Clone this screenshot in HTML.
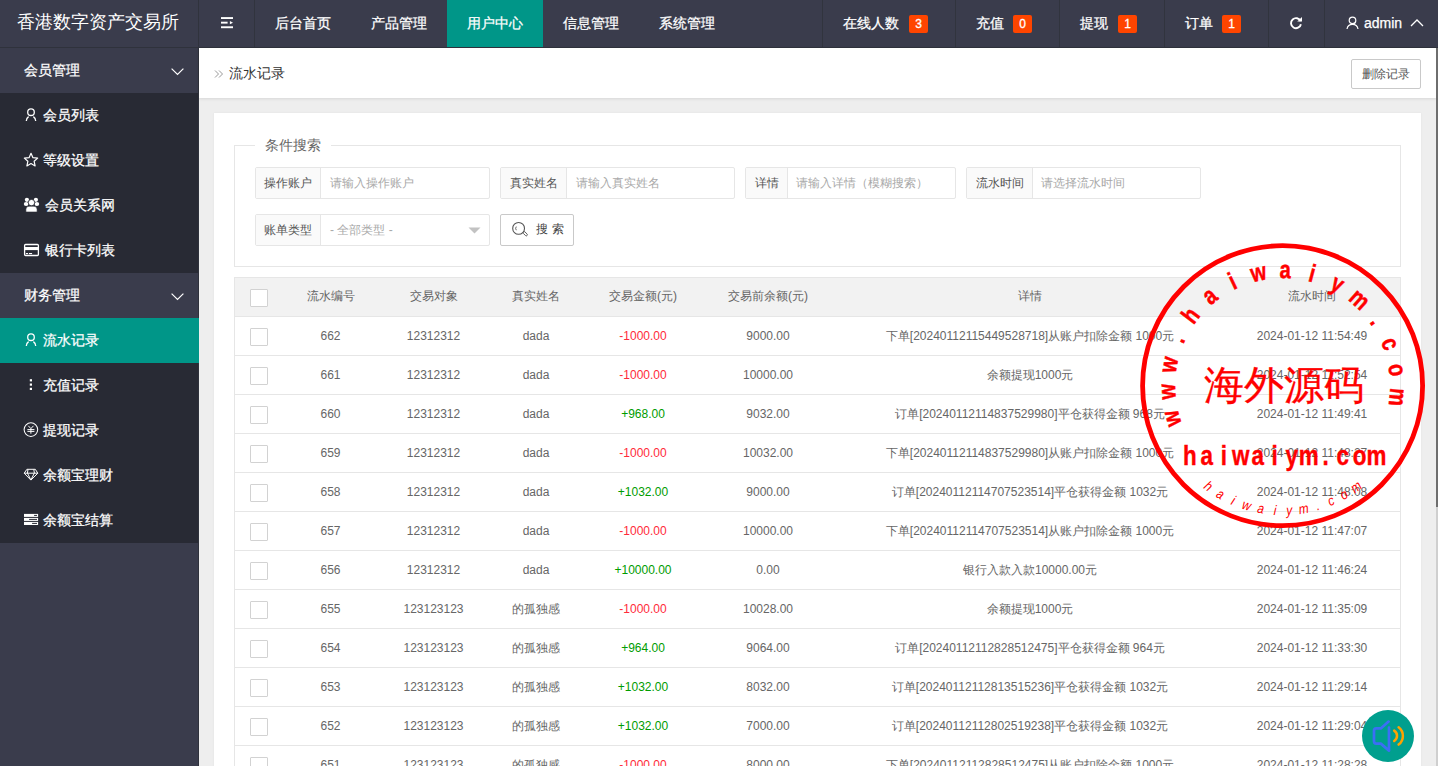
<!DOCTYPE html>
<html><head><meta charset="utf-8">
<style>
*{box-sizing:border-box;margin:0;padding:0}
html,body{width:1438px;height:766px;overflow:hidden}
body{position:relative;background:#eeeeee;font-family:"Liberation Sans",sans-serif;font-size:14px;color:#666;font-weight:500}
.abs{position:absolute}
#hd{position:absolute;left:0;top:0;width:1438px;height:48px;background:#3a3c4c;border-bottom:1px solid #2f323c}
#hd .logo{position:absolute;left:0;top:0;width:199px;height:47px;border-right:1px solid #30333d;color:#fff;font-size:18px;line-height:45px;padding-left:17px;white-space:nowrap}
#hd .sep{position:absolute;top:0;width:1px;height:47px;background:#31343e}
#hd .nv{position:absolute;top:0;height:47px;line-height:46px;color:#fff;font-size:14px;white-space:nowrap;-webkit-text-stroke:0.25px #fff}
#hd .act{background:#009688}
.badge{position:absolute;top:15px;width:19px;height:18px;background:#ff4500;color:#fff;font-size:12px;line-height:18px;text-align:center;border-radius:2px;-webkit-text-stroke:0.3px #fff}
#sd{position:absolute;left:0;top:48px;width:199px;height:718px;background:#3a3c4c;border-right:1px solid #2f323c}
#sd .it{position:absolute;left:0;width:198px;height:45px;line-height:45px;color:#fff;font-size:14px;white-space:nowrap;-webkit-text-stroke:0.25px #fff}
#sd .p{background:#3a3c4c}
#sd .c{background:#282a34}
#sd .on{background:#009688;width:199px}
#sd .it span{position:absolute;left:43px;top:0}
#sd .p span{left:24px}
#sd svg{position:absolute}
</style></head><body>

<div id="hd">
  <div class="logo">香港数字资产交易所</div>
  <svg class="abs" style="left:221px;top:17px" width="13" height="12" viewBox="0 0 13 12"><rect x="0" y="0.1" width="12" height="1.9" fill="#fff"/><rect x="0" y="4.7" width="6.6" height="1.9" fill="#fff"/><path d="M8.9 4.1 L12 5.65 L8.9 7.2Z" fill="#fff"/><rect x="0" y="9.3" width="12" height="1.9" fill="#fff"/></svg>
  <div class="sep" style="left:254px"></div>
  <div class="nv" style="left:275px">后台首页</div>
  <div class="nv" style="left:371px">产品管理</div>
  <div class="nv act" style="left:447px;width:96px;padding-left:20px">用户中心</div>
  <div class="nv" style="left:563px">信息管理</div>
  <div class="nv" style="left:659px">系统管理</div>

  <div class="sep" style="left:822px"></div>
  <div class="nv" style="left:843px">在线人数</div><div class="badge" style="left:909px">3</div>
  <div class="sep" style="left:955px"></div>
  <div class="nv" style="left:976px">充值</div><div class="badge" style="left:1013px">0</div>
  <div class="sep" style="left:1059px"></div>
  <div class="nv" style="left:1080px">提现</div><div class="badge" style="left:1118px">1</div>
  <div class="sep" style="left:1164px"></div>
  <div class="nv" style="left:1185px">订单</div><div class="badge" style="left:1222px">1</div>
  <div class="sep" style="left:1268px"></div>
  <svg class="abs" style="left:1289px;top:16px" width="14" height="14" viewBox="0 0 14 14"><path d="M11.6 5.2 A5 5 0 1 0 11.9 8.2" fill="none" stroke="#fff" stroke-width="1.9"/><path d="M8.2 5.6 L13 5.6 L13 0.9 Z" fill="#fff"/></svg>
  <div class="sep" style="left:1324px"></div>
  <svg class="abs" style="left:1346px;top:16px" width="13" height="14" viewBox="0 0 13 14"><circle cx="6.5" cy="4.4" r="3.3" fill="none" stroke="#fff" stroke-width="1.2"/><path d="M1 13 A5.6 5.6 0 0 1 12 13" fill="none" stroke="#fff" stroke-width="1.2"/></svg>
  <div class="nv" style="left:1364px">admin</div>
  <svg class="abs" style="left:1410px;top:19px" width="14" height="8" viewBox="0 0 14 8"><path d="M1 7 L7 1 L13 7" fill="none" stroke="#fff" stroke-width="1.3"/></svg>
</div>

<div id="sd">
  <div class="it p" style="top:0"><span>会员管理</span></div>
  <svg style="left:171px;top:20px" width="13" height="8" viewBox="0 0 13 8"><path d="M0.6 0.6 L6.5 6.5 L12.4 0.6" fill="none" stroke="#fff" stroke-width="1.2"/></svg>
  <div class="it c" style="top:45px"><span>会员列表</span></div>
  <div class="it c" style="top:90px"><span>等级设置</span></div>
  <div class="it c" style="top:135px"><span style="left:45px">会员关系网</span></div>
  <div class="it c" style="top:180px"><span style="left:45px">银行卡列表</span></div>
  <div class="it p" style="top:225px"><span>财务管理</span></div>
  <svg style="left:171px;top:245px" width="13" height="8" viewBox="0 0 13 8"><path d="M0.6 0.6 L6.5 6.5 L12.4 0.6" fill="none" stroke="#fff" stroke-width="1.2"/></svg>
  <div class="it on" style="top:270px"><span>流水记录</span></div>
  <div class="it c" style="top:315px"><span>充值记录</span></div>
  <div class="it c" style="top:360px"><span>提现记录</span></div>
  <div class="it c" style="top:405px"><span>余额宝理财</span></div>
  <div class="it c" style="top:450px"><span>余额宝结算</span></div>
</div>


<style>
#bc{position:absolute;left:199px;top:48px;width:1237px;height:50px;background:#fff;box-shadow:0 1px 3px rgba(0,0,0,.10)}
#bc .t{position:absolute;left:30px;top:0;line-height:50px;font-size:14px;color:#333}
#bc .btn{position:absolute;left:1152px;top:11px;width:70px;height:30px;border:1px solid #c9c9c9;border-radius:2px;font-size:12px;color:#555;text-align:center;line-height:28px}
#card{position:absolute;left:214px;top:113px;width:1207px;height:700px;background:#fff;box-shadow:0 0 2px rgba(0,0,0,.06)}
#fs{position:absolute;left:234px;top:145px;width:1167px;height:122px;border:1px solid #e6e6e6}
#lg{position:absolute;left:255px;top:135px;width:76px;height:20px;background:#fff;text-align:center;line-height:20px;font-size:14px;color:#666}
.ig{position:absolute;height:32px;border:1px solid #e6e6e6;border-radius:2px;background:#fff}
.ig .lb{position:absolute;left:0;top:0;height:30px;line-height:30px;background:#fafafa;border-right:1px solid #e6e6e6;font-size:12px;color:#555;text-align:center}
.ig .ph{position:absolute;top:0;line-height:30px;font-size:12px;color:#a9a9a9;white-space:nowrap}
#sbtn{position:absolute;left:500px;top:214px;width:74px;height:32px;border:1px solid #c9c9c9;border-radius:2px;background:#fff}
#sbtn span{position:absolute;left:35px;top:0;line-height:30px;font-size:12px;color:#333;letter-spacing:4px}
#tb{position:absolute;left:234px;top:277px;width:1167px;height:489px;border:1px solid #e6e6e6;border-bottom:none}
#th{position:absolute;left:234px;top:277px;width:1167px;height:40px;background:#f2f2f2;border:1px solid #e6e6e6}
.tr{position:absolute;left:234px;width:1167px;height:39px;border-bottom:1px solid #e6e6e6;border-left:1px solid #e6e6e6;border-right:1px solid #e6e6e6}
.tr b,.th b{position:absolute;top:0;font-weight:500;text-align:center;line-height:38px;font-size:12px;color:#666;white-space:nowrap}
.th b{line-height:38px}
.tr b{margin-left:-235px}
.cb{position:absolute;left:15px;top:11px;width:18px;height:18px;border:1px solid #d2d2d2;background:#fff;border-radius:1px}
.neg{color:#ff2b3a !important}
.pos{color:#009c00 !important}
#scr{position:absolute;left:1436px;top:48px;width:2px;height:718px;background:#cfcfcf}
#thumb{position:absolute;left:1436px;top:48px;width:2px;height:459px;background:#6e6e6e}
</style>

<svg class="abs" style="left:0;top:0;pointer-events:none" width="199" height="766" viewBox="0 0 199 766">
 <g fill="none" stroke="#fff" stroke-width="1.3">
  <circle cx="31" cy="112.2" r="3.3"/>
  <path d="M26.3 121 A5.3 5.3 0 0 1 28.6 116.6"/>
  <path d="M33.4 116.6 A5.3 5.3 0 0 1 35.7 121"/>
  <circle cx="31" cy="337.2" r="3.3"/>
  <path d="M26.3 346 A5.3 5.3 0 0 1 28.6 341.6"/>
  <path d="M33.4 341.6 A5.3 5.3 0 0 1 35.7 346"/>
 </g>
 <path fill="none" stroke="#fff" stroke-width="1.2" stroke-linejoin="round" d="M31.00 153.30 L32.94 157.63 L37.66 158.14 L34.14 161.32 L35.11 165.96 L31.00 163.60 L26.89 165.96 L27.86 161.32 L24.34 158.14 L29.06 157.63Z"/>
 <g fill="#fff">
  <circle cx="26.9" cy="199.8" r="2.1"/><circle cx="35.9" cy="199.8" r="2.1"/>
  <ellipse cx="26.1" cy="204" rx="2.3" ry="2"/><ellipse cx="36.9" cy="204" rx="2.3" ry="2"/>
  <circle cx="31.5" cy="202.6" r="3.2" stroke="#282a34" stroke-width="0.8"/>
  <path d="M25.9 212 L25.9 209.5 Q25.9 206.2 29 206.2 L34 206.2 Q37.1 206.2 37.1 209.5 L37.1 212Z" stroke="#282a34" stroke-width="0.6"/>
 </g>
 <rect x="24.6" y="244.5" width="13.8" height="11" rx="1" fill="none" stroke="#fff" stroke-width="1.3"/>
 <rect x="24.6" y="247" width="13.8" height="3.1" fill="#fff"/>
 <rect x="25.9" y="253" width="2.1" height="1.1" fill="#fff"/><rect x="28.9" y="253" width="3.2" height="1.1" fill="#fff"/>
 <g fill="#fff"><rect x="29.8" y="379.2" width="2.2" height="2.2"/><rect x="29.8" y="383.5" width="2.2" height="2.2"/><rect x="29.8" y="387.8" width="2.2" height="2.2"/></g>
 <circle cx="30.9" cy="429.6" r="6.8" fill="none" stroke="#fff" stroke-width="1.05"/>
 <path d="M28.3 425.8 L30.9 428.6 L33.5 425.8 M27.4 429.6 L34.4 429.6 M27.4 431.4 L34.4 431.4 M30.9 428.6 L30.9 433.7" fill="none" stroke="#fff" stroke-width="1"/>
 <path d="M26.9 469.3 L35.3 469.3 L37.8 473.2 L30.9 480.1 L24.2 473.2Z M24.2 473.2 L37.8 473.2 M28 469.5 L27.4 473 L30.9 480 L34.4 473 L33.8 469.5" fill="none" stroke="#fff" stroke-width="1" stroke-linejoin="round"/>
 <g fill="#fff"><rect x="24" y="513.9" width="14.1" height="3"/><rect x="24" y="517.9" width="14.1" height="3"/><rect x="24" y="521.9" width="14.1" height="3.1"/></g>
 <g stroke="#282a34" stroke-width="1" stroke-linecap="round"><path d="M34.5 515.4 L36.6 515.4 M29.5 519.4 L36.6 519.4 M32.5 523.4 L36.6 523.4"/></g>
</svg>
<div id="bc">
  <svg class="abs" style="left:15px;top:21px" width="10" height="10" viewBox="0 0 10 10"><path d="M1 1.5 L4.5 5 L1 8.5 M5 1.5 L8.5 5 L5 8.5" fill="none" stroke="#999" stroke-width="1"/></svg>
  <div class="t">流水记录</div>
  <div class="btn">删除记录</div>
</div>
<div id="card"></div>
<div id="fs"></div>
<div id="lg">条件搜索</div>

<div class="ig" style="left:255px;top:167px;width:235px"><div class="lb" style="width:65px">操作账户</div><div class="ph" style="left:74px">请输入操作账户</div></div>
<div class="ig" style="left:500px;top:167px;width:235px"><div class="lb" style="width:66px">真实姓名</div><div class="ph" style="left:75px">请输入真实姓名</div></div>
<div class="ig" style="left:745px;top:167px;width:211px"><div class="lb" style="width:42px">详情</div><div class="ph" style="left:50px">请输入详情（模糊搜索）</div></div>
<div class="ig" style="left:966px;top:167px;width:235px"><div class="lb" style="width:66px">流水时间</div><div class="ph" style="left:74px">请选择流水时间</div></div>
<div class="ig" style="left:255px;top:214px;width:235px"><div class="lb" style="width:65px">账单类型</div><div class="ph" style="left:74px">- 全部类型 -</div>
  <svg class="abs" style="left:212px;top:12px" width="13" height="7" viewBox="0 0 13 7"><path d="M0.5 0.5 L12.5 0.5 L6.5 6.5Z" fill="#c2c2c2"/></svg></div>
<div id="sbtn"><svg class="abs" style="left:10.3px;top:5.8px" width="18" height="17" viewBox="0 0 18 17"><circle cx="7.6" cy="7.4" r="5.9" fill="none" stroke="#555" stroke-width="1.1"/><rect x="11.6" y="11.6" width="5.2" height="2.2" rx="1.1" transform="rotate(45 14.2 12.7)" fill="none" stroke="#555" stroke-width="0.9"/><path d="M5.3 5.6 A3 3 0 0 0 5.3 9.2" fill="none" stroke="#555" stroke-width="0.9"/></svg><span style="top:-1px;color:#444">搜索</span></div>

<div id="th"><i class="cb" style="top:11px"></i></div>
<div class="th" style="position:absolute;left:0;top:277px;width:1438px;height:40px">
<b style="left:284px;width:93px">流水编号</b><b style="left:377px;width:113px">交易对象</b><b style="left:490px;width:92px">真实姓名</b><b style="left:582px;width:122px">交易金额(元)</b><b style="left:704px;width:128px">交易前余额(元)</b><b style="left:832px;width:396px">详情</b><b style="left:1228px;width:168px">流水时间</b>
</div>
<div class="tr" style="top:317px"><i class="cb"></i><b style="left:284px;width:93px">662</b><b style="left:377px;width:113px">12312312</b><b style="left:490px;width:92px">dada</b><b class="neg" style="left:582px;width:122px">-1000.00</b><b style="left:704px;width:128px">9000.00</b><b style="left:832px;width:396px">下单[20240112115449528718]从账户扣除金额 1000元</b><b style="left:1228px;width:168px">2024-01-12 11:54:49</b></div>
<div class="tr" style="top:356px"><i class="cb"></i><b style="left:284px;width:93px">661</b><b style="left:377px;width:113px">12312312</b><b style="left:490px;width:92px">dada</b><b class="neg" style="left:582px;width:122px">-1000.00</b><b style="left:704px;width:128px">10000.00</b><b style="left:832px;width:396px">余额提现1000元</b><b style="left:1228px;width:168px">2024-01-12 11:52:54</b></div>
<div class="tr" style="top:395px"><i class="cb"></i><b style="left:284px;width:93px">660</b><b style="left:377px;width:113px">12312312</b><b style="left:490px;width:92px">dada</b><b class="pos" style="left:582px;width:122px">+968.00</b><b style="left:704px;width:128px">9032.00</b><b style="left:832px;width:396px">订单[20240112114837529980]平仓获得金额 968元</b><b style="left:1228px;width:168px">2024-01-12 11:49:41</b></div>
<div class="tr" style="top:434px"><i class="cb"></i><b style="left:284px;width:93px">659</b><b style="left:377px;width:113px">12312312</b><b style="left:490px;width:92px">dada</b><b class="neg" style="left:582px;width:122px">-1000.00</b><b style="left:704px;width:128px">10032.00</b><b style="left:832px;width:396px">下单[20240112114837529980]从账户扣除金额 1000元</b><b style="left:1228px;width:168px">2024-01-12 11:48:27</b></div>
<div class="tr" style="top:473px"><i class="cb"></i><b style="left:284px;width:93px">658</b><b style="left:377px;width:113px">12312312</b><b style="left:490px;width:92px">dada</b><b class="pos" style="left:582px;width:122px">+1032.00</b><b style="left:704px;width:128px">9000.00</b><b style="left:832px;width:396px">订单[20240112114707523514]平仓获得金额 1032元</b><b style="left:1228px;width:168px">2024-01-12 11:48:08</b></div>
<div class="tr" style="top:512px"><i class="cb"></i><b style="left:284px;width:93px">657</b><b style="left:377px;width:113px">12312312</b><b style="left:490px;width:92px">dada</b><b class="neg" style="left:582px;width:122px">-1000.00</b><b style="left:704px;width:128px">10000.00</b><b style="left:832px;width:396px">下单[20240112114707523514]从账户扣除金额 1000元</b><b style="left:1228px;width:168px">2024-01-12 11:47:07</b></div>
<div class="tr" style="top:551px"><i class="cb"></i><b style="left:284px;width:93px">656</b><b style="left:377px;width:113px">12312312</b><b style="left:490px;width:92px">dada</b><b class="pos" style="left:582px;width:122px">+10000.00</b><b style="left:704px;width:128px">0.00</b><b style="left:832px;width:396px">银行入款入款10000.00元</b><b style="left:1228px;width:168px">2024-01-12 11:46:24</b></div>
<div class="tr" style="top:590px"><i class="cb"></i><b style="left:284px;width:93px">655</b><b style="left:377px;width:113px">123123123</b><b style="left:490px;width:92px">的孤独感</b><b class="neg" style="left:582px;width:122px">-1000.00</b><b style="left:704px;width:128px">10028.00</b><b style="left:832px;width:396px">余额提现1000元</b><b style="left:1228px;width:168px">2024-01-12 11:35:09</b></div>
<div class="tr" style="top:629px"><i class="cb"></i><b style="left:284px;width:93px">654</b><b style="left:377px;width:113px">123123123</b><b style="left:490px;width:92px">的孤独感</b><b class="pos" style="left:582px;width:122px">+964.00</b><b style="left:704px;width:128px">9064.00</b><b style="left:832px;width:396px">订单[20240112112828512475]平仓获得金额 964元</b><b style="left:1228px;width:168px">2024-01-12 11:33:30</b></div>
<div class="tr" style="top:668px"><i class="cb"></i><b style="left:284px;width:93px">653</b><b style="left:377px;width:113px">123123123</b><b style="left:490px;width:92px">的孤独感</b><b class="pos" style="left:582px;width:122px">+1032.00</b><b style="left:704px;width:128px">8032.00</b><b style="left:832px;width:396px">订单[20240112112813515236]平仓获得金额 1032元</b><b style="left:1228px;width:168px">2024-01-12 11:29:14</b></div>
<div class="tr" style="top:707px"><i class="cb"></i><b style="left:284px;width:93px">652</b><b style="left:377px;width:113px">123123123</b><b style="left:490px;width:92px">的孤独感</b><b class="pos" style="left:582px;width:122px">+1032.00</b><b style="left:704px;width:128px">7000.00</b><b style="left:832px;width:396px">订单[20240112112802519238]平仓获得金额 1032元</b><b style="left:1228px;width:168px">2024-01-12 11:29:04</b></div>
<div class="tr" style="top:746px"><i class="cb"></i><b style="left:284px;width:93px">651</b><b style="left:377px;width:113px">123123123</b><b style="left:490px;width:92px">的孤独感</b><b class="neg" style="left:582px;width:122px">-1000.00</b><b style="left:704px;width:128px">8000.00</b><b style="left:832px;width:396px">下单[20240112112828512475]从账户扣除金额 1000元</b><b style="left:1228px;width:168px">2024-01-12 11:28:28</b></div>
<svg class="abs" style="left:0;top:0;pointer-events:none" width="1438" height="766" viewBox="0 0 1438 766">
<circle cx="1282.6" cy="385.7" r="140" fill="none" stroke="#ff0000" stroke-width="4.8"/>
<text transform="translate(1179.53 416.23) rotate(-106.50) scale(0.8 1)" text-anchor="middle" font-family="Liberation Sans" font-weight="bold" font-size="25" fill="#ff0000" stroke="#ff0000" stroke-width="0.5">w</text>
<text transform="translate(1175.25 391.36) rotate(-93.02) scale(0.8 1)" text-anchor="middle" font-family="Liberation Sans" font-weight="bold" font-size="25" fill="#ff0000" stroke="#ff0000" stroke-width="0.5">w</text>
<text transform="translate(1176.89 366.18) rotate(-79.54) scale(0.8 1)" text-anchor="middle" font-family="Liberation Sans" font-weight="bold" font-size="25" fill="#ff0000" stroke="#ff0000" stroke-width="0.5">w</text>
<text transform="translate(1184.35 342.08) rotate(-66.06) scale(0.8 1)" text-anchor="middle" font-family="Liberation Sans" font-weight="bold" font-size="25" fill="#ff0000" stroke="#ff0000" stroke-width="0.5">.</text>
<text transform="translate(1197.22 320.38) rotate(-52.58) scale(0.8 1)" text-anchor="middle" font-family="Liberation Sans" font-weight="bold" font-size="25" fill="#ff0000" stroke="#ff0000" stroke-width="0.5">h</text>
<text transform="translate(1214.80 302.28) rotate(-39.10) scale(0.8 1)" text-anchor="middle" font-family="Liberation Sans" font-weight="bold" font-size="25" fill="#ff0000" stroke="#ff0000" stroke-width="0.5">a</text>
<text transform="translate(1236.12 288.77) rotate(-25.62) scale(0.8 1)" text-anchor="middle" font-family="Liberation Sans" font-weight="bold" font-size="25" fill="#ff0000" stroke="#ff0000" stroke-width="0.5">i</text>
<text transform="translate(1259.99 280.60) rotate(-12.14) scale(0.8 1)" text-anchor="middle" font-family="Liberation Sans" font-weight="bold" font-size="25" fill="#ff0000" stroke="#ff0000" stroke-width="0.5">w</text>
<text transform="translate(1285.11 278.23) rotate(1.34) scale(0.8 1)" text-anchor="middle" font-family="Liberation Sans" font-weight="bold" font-size="25" fill="#ff0000" stroke="#ff0000" stroke-width="0.5">a</text>
<text transform="translate(1310.10 281.78) rotate(14.82) scale(0.8 1)" text-anchor="middle" font-family="Liberation Sans" font-weight="bold" font-size="25" fill="#ff0000" stroke="#ff0000" stroke-width="0.5">i</text>
<text transform="translate(1333.56 291.05) rotate(28.30) scale(0.8 1)" text-anchor="middle" font-family="Liberation Sans" font-weight="bold" font-size="25" fill="#ff0000" stroke="#ff0000" stroke-width="0.5">y</text>
<text transform="translate(1354.22 305.54) rotate(41.78) scale(0.8 1)" text-anchor="middle" font-family="Liberation Sans" font-weight="bold" font-size="25" fill="#ff0000" stroke="#ff0000" stroke-width="0.5">m</text>
<text transform="translate(1370.94 324.44) rotate(55.26) scale(0.8 1)" text-anchor="middle" font-family="Liberation Sans" font-weight="bold" font-size="25" fill="#ff0000" stroke="#ff0000" stroke-width="0.5">.</text>
<text transform="translate(1382.78 346.72) rotate(68.74) scale(0.8 1)" text-anchor="middle" font-family="Liberation Sans" font-weight="bold" font-size="25" fill="#ff0000" stroke="#ff0000" stroke-width="0.5">c</text>
<text transform="translate(1389.11 371.15) rotate(82.22) scale(0.8 1)" text-anchor="middle" font-family="Liberation Sans" font-weight="bold" font-size="25" fill="#ff0000" stroke="#ff0000" stroke-width="0.5">o</text>
<text transform="translate(1389.57 396.38) rotate(95.70) scale(0.8 1)" text-anchor="middle" font-family="Liberation Sans" font-weight="bold" font-size="25" fill="#ff0000" stroke="#ff0000" stroke-width="0.5">m</text>
<text transform="translate(1205.75 489.93) rotate(36.40) scale(0.85 1)" text-anchor="middle" font-family="Liberation Sans" font-style="italic" font-size="14" fill="#ff0000">h</text>
<text transform="translate(1218.20 498.05) rotate(29.82) scale(0.85 1)" text-anchor="middle" font-family="Liberation Sans" font-style="italic" font-size="14" fill="#ff0000">a</text>
<text transform="translate(1231.50 504.69) rotate(23.24) scale(0.85 1)" text-anchor="middle" font-family="Liberation Sans" font-style="italic" font-size="14" fill="#ff0000">i</text>
<text transform="translate(1245.47 509.76) rotate(16.66) scale(0.85 1)" text-anchor="middle" font-family="Liberation Sans" font-style="italic" font-size="14" fill="#ff0000">w</text>
<text transform="translate(1259.93 513.20) rotate(10.08) scale(0.85 1)" text-anchor="middle" font-family="Liberation Sans" font-style="italic" font-size="14" fill="#ff0000">a</text>
<text transform="translate(1274.69 514.96) rotate(3.50) scale(0.85 1)" text-anchor="middle" font-family="Liberation Sans" font-style="italic" font-size="14" fill="#ff0000">i</text>
<text transform="translate(1289.56 515.01) rotate(-3.08) scale(0.85 1)" text-anchor="middle" font-family="Liberation Sans" font-style="italic" font-size="14" fill="#ff0000">y</text>
<text transform="translate(1304.33 513.36) rotate(-9.66) scale(0.85 1)" text-anchor="middle" font-family="Liberation Sans" font-style="italic" font-size="14" fill="#ff0000">m</text>
<text transform="translate(1318.82 510.03) rotate(-16.24) scale(0.85 1)" text-anchor="middle" font-family="Liberation Sans" font-style="italic" font-size="14" fill="#ff0000">.</text>
<text transform="translate(1332.82 505.06) rotate(-22.82) scale(0.85 1)" text-anchor="middle" font-family="Liberation Sans" font-style="italic" font-size="14" fill="#ff0000">c</text>
<text transform="translate(1346.17 498.52) rotate(-29.40) scale(0.85 1)" text-anchor="middle" font-family="Liberation Sans" font-style="italic" font-size="14" fill="#ff0000">o</text>
<text transform="translate(1358.68 490.49) rotate(-35.98) scale(0.85 1)" text-anchor="middle" font-family="Liberation Sans" font-style="italic" font-size="14" fill="#ff0000">m</text>
<text transform="translate(1189.80 465.2) scale(0.83 1)" text-anchor="middle" font-family="Liberation Sans" font-weight="bold" font-size="27" fill="#ff0000" stroke="#ff0000" stroke-width="0.4">h</text>
<text transform="translate(1206.78 465.2) scale(0.83 1)" text-anchor="middle" font-family="Liberation Sans" font-weight="bold" font-size="27" fill="#ff0000" stroke="#ff0000" stroke-width="0.4">a</text>
<text transform="translate(1223.76 465.2) scale(0.83 1)" text-anchor="middle" font-family="Liberation Sans" font-weight="bold" font-size="27" fill="#ff0000" stroke="#ff0000" stroke-width="0.4">i</text>
<text transform="translate(1240.74 465.2) scale(0.83 1)" text-anchor="middle" font-family="Liberation Sans" font-weight="bold" font-size="27" fill="#ff0000" stroke="#ff0000" stroke-width="0.4">w</text>
<text transform="translate(1257.72 465.2) scale(0.83 1)" text-anchor="middle" font-family="Liberation Sans" font-weight="bold" font-size="27" fill="#ff0000" stroke="#ff0000" stroke-width="0.4">a</text>
<text transform="translate(1274.70 465.2) scale(0.83 1)" text-anchor="middle" font-family="Liberation Sans" font-weight="bold" font-size="27" fill="#ff0000" stroke="#ff0000" stroke-width="0.4">i</text>
<text transform="translate(1291.68 465.2) scale(0.83 1)" text-anchor="middle" font-family="Liberation Sans" font-weight="bold" font-size="27" fill="#ff0000" stroke="#ff0000" stroke-width="0.4">y</text>
<text transform="translate(1308.66 465.2) scale(0.83 1)" text-anchor="middle" font-family="Liberation Sans" font-weight="bold" font-size="27" fill="#ff0000" stroke="#ff0000" stroke-width="0.4">m</text>
<text transform="translate(1325.64 465.2) scale(0.83 1)" text-anchor="middle" font-family="Liberation Sans" font-weight="bold" font-size="27" fill="#ff0000" stroke="#ff0000" stroke-width="0.4">.</text>
<text transform="translate(1342.62 465.2) scale(0.83 1)" text-anchor="middle" font-family="Liberation Sans" font-weight="bold" font-size="27" fill="#ff0000" stroke="#ff0000" stroke-width="0.4">c</text>
<text transform="translate(1359.60 465.2) scale(0.83 1)" text-anchor="middle" font-family="Liberation Sans" font-weight="bold" font-size="27" fill="#ff0000" stroke="#ff0000" stroke-width="0.4">o</text>
<text transform="translate(1376.58 465.2) scale(0.83 1)" text-anchor="middle" font-family="Liberation Sans" font-weight="bold" font-size="27" fill="#ff0000" stroke="#ff0000" stroke-width="0.4">m</text>
<text x="1283.5" y="399" text-anchor="middle" font-family="Liberation Serif" font-size="40" fill="#ff0000" stroke="#ff0000" stroke-width="0.3">海外源码</text>
</svg>
<svg class="abs" style="left:1362px;top:710px" width="52" height="52" viewBox="1362 710 52 52">
<circle cx="1388" cy="736" r="26" fill="#009f8e"/>
<path d="M1388.6 721.6 L1380.8 728.4 L1376.2 728.4 Q1374 728.4 1374 731 L1374 741 Q1374 743.6 1376.2 743.6 L1380.8 743.6 L1389 750.6 L1389 727.6" fill="none" stroke="#3b6ef5" stroke-width="2.7" stroke-linejoin="round" stroke-linecap="round"/>
<path d="M1394.2 730.6 A6.2 6.2 0 0 1 1394.2 741" fill="none" stroke="#ffa200" stroke-width="2.5" stroke-linecap="round"/>
<path d="M1398.6 727.2 A11 11 0 0 1 1398.6 744.6" fill="none" stroke="#ffa200" stroke-width="2.5" stroke-linecap="round"/>
</svg>
<div id="scr"></div><div id="thumb"></div>

</body></html>
